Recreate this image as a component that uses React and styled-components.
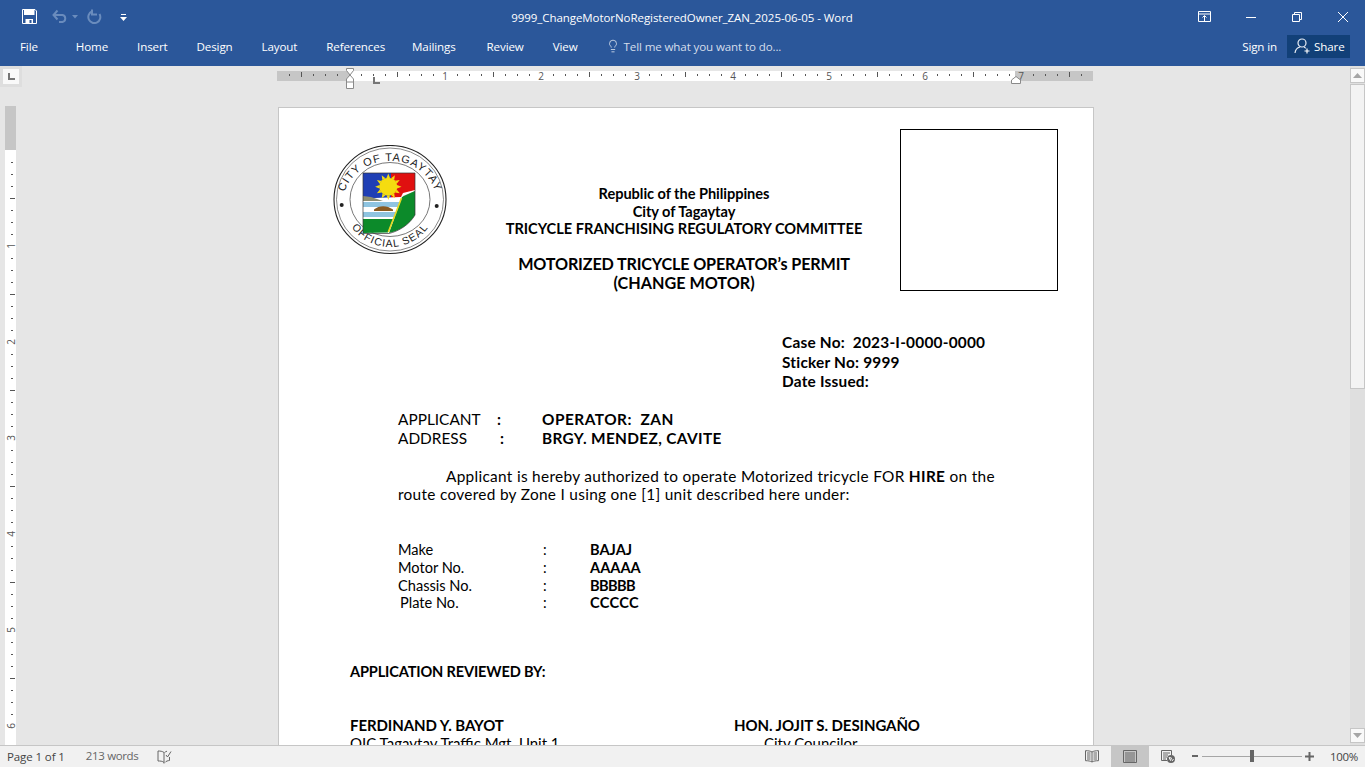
import React from 'react';
import styled, { createGlobalStyle } from 'styled-components';
import { Lightbulb } from 'lucide-react';

const GlobalStyle = createGlobalStyle`
  html, body {
    margin: 0;
    height: 100%;
    overflow: hidden;
    background: #e6e6e6;
    font-family: "Open Sans", "Noto Sans", sans-serif;
  }
  * { box-sizing: border-box; }
`;

const Window = styled.div`
  display: flex;
  flex-direction: column;
  height: 767px;
  width: 1365px;
  overflow: hidden;
`;

const TitleBar = styled.div`
  display: grid;
  grid-template-columns: 1fr auto 1fr;
  align-items: center;
  height: 33px;
  background: #2b579a;
  color: #fff;
`;

const Qat = styled.div`
  display: flex;
  align-items: center;
  height: 33px;
  padding-left: 22px;
`;

const DocTitle = styled.div`
  font-size: 11.5px;
  letter-spacing: -0.06px;
  padding-top: 2px;
  margin-left: -1px;
  white-space: nowrap;
`;

const WinControls = styled.div`
  display: flex;
  justify-content: flex-end;
  align-items: center;
  height: 33px;
  padding-right: 17px;
`;

const TabRow = styled.div`
  display: flex;
  align-items: center;
  height: 33px;
  background: #2b579a;
  color: #fff;
  font-size: 11.6px;
  letter-spacing: -0.13px;
  padding-bottom: 7px;
`;

const Tab = styled.span`
  margin-left: ${(p) => p.$left}px;
  white-space: nowrap;
`;

const TellMe = styled.span`
  display: flex;
  align-items: center;
  gap: 4px;
  margin-left: 28px;
  color: #d5deeb;
  white-space: nowrap;
`;

const Spacer = styled.div`
  flex: 1;
`;

const ShareButton = styled.div`
  display: flex;
  align-items: center;
  gap: 3px;
  height: 23px;
  width: 63px;
  margin: 0 15px 0 10px;
  padding-left: 7px;
  background: #124078;
`;

const Workspace = styled.div`
  flex: 1;
  min-height: 0;
  display: grid;
  grid-template-columns: 22px 1fr 15px;
  background: #e6e6e6;
`;

const LeftRail = styled.div`
  display: flex;
  flex-direction: column;
  overflow: hidden;
`;

const Corner = styled.div`
  display: flex;
  align-items: center;
  justify-content: center;
  width: 22px;
  height: 21px;
  background: #dedede;
`;

const CornerTab = styled.div`
  display: flex;
  align-items: center;
  justify-content: center;
  width: 16px;
  height: 15px;
  background: #f9f9f9;
`;

const VRuler = styled.svg`
  display: block;
  margin: 19px 0 0 5px;
  flex: none;
  overflow: visible;
`;

const Center = styled.div`
  position: relative;
  overflow: hidden;
`;

const HRuler = styled.svg`
  display: block;
  margin: 0 0 0 251px;
`;

const Page = styled.div`
  width: 816px;
  height: 800px;
  margin: 26px 0 0 256px;
  padding: 21px 35px 0 54px;
  background: #fff;
  border: 1px solid #c6c6c6;
  color: #000;
  font-family: Lato, "Open Sans", sans-serif;
  font-size: 15px;
`;

const Header = styled.div`
  display: flex;
  align-items: flex-start;
`;

const Seal = styled.svg`
  flex: none;
  margin-top: 16px;
`;

const TitleBlock = styled.div`
  flex: 1;
  margin-top: 56px;
  padding-left: 21px;
  text-align: center;
  font-weight: 700;
`;

const TitleLine = styled.div`
  line-height: ${(p) => p.$lh || 17.5}px;
  font-size: ${(p) => p.$size || 14.6}px;
  letter-spacing: ${(p) => p.$ls || 0}px;
  margin-top: ${(p) => p.$top || 0}px;
  white-space: nowrap;
`;

const PhotoBox = styled.div`
  flex: none;
  width: 158px;
  height: 162px;
  border: 1px solid #000;
`;

const CaseBlock = styled.div`
  margin: 41px 0 0 449px;
  font-weight: 700;
  font-size: 15.4px;
  line-height: 19.5px;
  letter-spacing: 0.22px;
`;

const Section = styled.div`
  margin: ${(p) => p.$top}px 0 0 ${(p) => p.$left ?? 65}px;
`;

const InfoRow = styled.div`
  display: grid;
  grid-template-columns: ${(p) => p.$label}px ${(p) => p.$colon}px 1fr;
  line-height: ${(p) => p.$lh}px;
  font-size: ${(p) => p.$size}px;
  white-space: nowrap;
`;

const Strong = styled.span`
  font-weight: 700;
  letter-spacing: ${(p) => p.$ls || 0}px;
`;

const PlateLabel = styled.span`
  padding-left: 2px;
`;

const Paragraph = styled.div`
  width: 620px;
  font-size: 15.4px;
  line-height: 18.3px;
  letter-spacing: 0.3px;
  white-space: nowrap;
`;

const Indent = styled.span`
  display: inline-block;
  width: 48px;
`;

const ReviewHead = styled.div`
  font-weight: 700;
  font-size: 14.6px;
  line-height: 18px;
  letter-spacing: -0.17px;
`;

const Signers = styled.div`
  display: grid;
  grid-template-columns: 384px 1fr;
  line-height: 18px;
  font-size: 15px;
`;

const SignName = styled.div`
  font-weight: 700;
  letter-spacing: -0.08px;
`;

const SignRole = styled.div`
  padding-left: ${(p) => p.$pad || 0}px;
`;

const ScrollBar = styled.div`
  display: flex;
  flex-direction: column;
  background: #dfdfdf;
`;

const ScrollButton = styled.div`
  display: flex;
  align-items: center;
  justify-content: center;
  height: 15px;
  width: 15px;
  background: #f9f9f9;
  border: 1px solid #c6c6c6;
  margin-top: ${(p) => p.$top || 0}px;
`;

const ScrollThumb = styled.div`
  width: 15px;
  height: 305px;
  margin-top: 1px;
  background: #f3f3f3;
  border: 1px solid #c6c6c6;
`;

const ScrollFoot = styled.div`
  height: 2px;
`;

const StatusBar = styled.div`
  display: flex;
  align-items: center;
  height: 22px;
  background: #f1f1f1;
  border-top: 1px solid #c6c6c6;
  color: #444;
  font-size: 11.5px;
  letter-spacing: -0.1px;
`;

const StatusText = styled.span`
  margin-left: ${(p) => p.$left}px;
  margin-top: ${(p) => p.$top || 0}px;
  color: ${(p) => p.$color || '#444'};
  letter-spacing: ${(p) => p.$ls ?? -0.1}px;
  white-space: nowrap;
`;

const ViewButton = styled.div`
  display: flex;
  align-items: center;
  justify-content: center;
  width: 38px;
  height: 21px;
  background: ${(p) => (p.$active ? '#c6c6c6' : 'transparent')};
`;

const ZoomTrack = styled.div`
  position: relative;
  width: 100px;
  height: 1px;
  margin: 0 3px 0 4px;
  background: #a6a6a6;
`;

const ZoomThumb = styled.div`
  position: absolute;
  left: 48px;
  top: -6px;
  width: 4px;
  height: 12px;
  background: #666;
`;

const StatusEnd = styled.div`
  width: 7px;
`;

const Marker = styled.svg`
  position: absolute;
  left: ${(p) => p.$x}px;
  top: ${(p) => p.$y}px;
`;

const SaveIcon = () => (
  <svg width="15" height="15" viewBox="0 0 15 15" style={{ display: 'block' }}>
    <path d="M0.5 0.5H13L14.5 2V14.5H0.5Z" fill="none" stroke="#fff" />
    <path d="M2 1H12.5V6H2ZM3.5 10H11V14.5H3.5Z" fill="#fff" />
    <rect x="7.5" y="11" width="2" height="3" fill="#2b579a" />
  </svg>
);

const UndoIcon = () => (
  <svg width="16" height="15" viewBox="0 0 16 15" style={{ marginLeft: 15 }}>
    <path d="M2 6H10.5A3.6 3.6 0 0 1 10.5 13H7M5.5 1.5L1.5 6L5.5 10.5" fill="none" stroke="#6a8cbd" strokeWidth="2" />
  </svg>
);

const DropArrow = ({ color = '#6a8cbd', left = 4 }) => (
  <svg width="6" height="4" viewBox="0 0 6 4" style={{ marginLeft: left }}>
    <path d="M0 0H6L3 3.5Z" fill={color} />
  </svg>
);

const RedoIcon = () => (
  <svg width="15" height="15" viewBox="0 0 15 15" style={{ marginLeft: 9 }}>
    <path d="M5 2.5A6 6 0 1 0 12.5 5M5 0.5V5.5H10" fill="none" stroke="#6a8cbd" strokeWidth="2" />
  </svg>
);

const CustomizeIcon = () => (
  <svg width="7" height="8" viewBox="0 0 7 8" style={{ marginLeft: 18, marginTop: 2 }}>
    <rect x="1" y="0" width="5" height="1" fill="#fff" />
    <path d="M0 3H7L3.5 7Z" fill="#fff" />
  </svg>
);

const WinIcons = () => (
  <>
    <svg width="13" height="11" viewBox="0 0 13 11">
      <path d="M0.5 0.5H12.5V10.5H0.5ZM0.5 3H12.5M6.5 10V5M4.5 6.5L6.5 4.5L8.5 6.5" fill="none" stroke="#fff" />
    </svg>
    <svg width="10" height="10" viewBox="0 0 10 10" style={{ marginLeft: 35 }}>
      <path d="M0 5.5H10" stroke="#fff" />
    </svg>
    <svg width="10" height="10" viewBox="0 0 10 10" style={{ marginLeft: 36 }}>
      <path d="M0.5 2.5H7.5V9.5H0.5ZM2.5 2.5V0.5H9.5V7.5H7.5" fill="none" stroke="#fff" />
    </svg>
    <svg width="10" height="10" viewBox="0 0 10 10" style={{ marginLeft: 36 }}>
      <path d="M0 0L10 10M10 0L0 10" stroke="#fff" />
    </svg>
  </>
);

const ShareIcon = () => (
  <svg width="17" height="16" viewBox="0 0 17 16">
    <circle cx="8" cy="5" r="4" fill="none" stroke="#e8edf5" strokeWidth="1.2" />
    <path d="M1 15C1.5 11 4 9.5 6 9M10 9.2C10.6 9.4 11.2 9.7 11.8 10.2" fill="none" stroke="#e8edf5" strokeWidth="1.2" />
    <path d="M13 10.5V15.5M10.5 13H15.5" stroke="#fff" strokeWidth="1.2" />
  </svg>
);

const ProofIcon = () => (
  <svg width="15" height="14" viewBox="0 0 15 14" style={{ marginLeft: 19 }}>
    <path d="M7 2.5C5.5 1.2 3 1 1 1V11C3 11 5.5 11 7 12.5V2.5M7 12.5V13.5M7.5 2.5C8 2 9 1.5 10 1.2M12.5 7V10.5C11 10.7 9 11 8 12.5" fill="none" stroke="#666" />
    <path d="M9 5L10.5 7L14 1.5" fill="none" stroke="#666" />
  </svg>
);

const ReadIcon = () => (
  <svg width="14" height="13" viewBox="0 0 14 13">
    <path d="M7 2C5.5 1 3 0.7 0.5 0.7V10.7C3 10.7 5.5 11 7 12C8.5 11 11 10.7 13.5 10.7V0.7C11 0.7 8.5 1 7 2ZM7 2V12" fill="none" stroke="#666" />
    <path d="M2 3H5.5M2 5H5.5M2 7H5.5M2 9H5.5M8.5 3H12M8.5 5H12M8.5 7H12M8.5 9H12" stroke="#666" />
  </svg>
);

const PrintIcon = () => (
  <svg width="14" height="13" viewBox="0 0 14 13">
    <path d="M0.5 0.5H13.5V12.5H0.5Z" fill="none" stroke="#666" />
    <path d="M2 3H12M2 5H12M2 7H12M2 9H12M2 11H12" stroke="#666" />
  </svg>
);

const WebIcon = () => (
  <svg width="14" height="13" viewBox="0 0 14 13">
    <path d="M6 10.5H0.5V0.5H10.5V5" fill="none" stroke="#666" />
    <path d="M2 3H9M2 5H7M2 7H6M2 9H5" stroke="#666" />
    <circle cx="10" cy="9" r="4" fill="#666" />
    <path d="M8 7.5L10.5 8L9.5 10.5ZM11 11L12.5 9" stroke="#f1f1f1" fill="none" />
  </svg>
);

const Triangle = ({ down }) => (
  <svg width="9" height="5" viewBox="0 0 9 5">
    <path d={down ? 'M0 0H9L4.5 5Z' : 'M0 5H9L4.5 0Z'} fill="#a6a6a6" />
  </svg>
);

const HorizontalRuler = () => {
  const ticks = [];
  const origin = 349 - 273;
  for (let i = -6; i <= 62; i++) {
    const x = origin + i * 12;
    if (x < 5 || x > 819) continue;
    if (i % 8 === 0 && i > 0 && i <= 56) {
      ticks.push(
        <text key={i} x={x} y="13.5" textAnchor="middle" fontSize="10" fontFamily="Open Sans" fill="#555">
          {i / 8}
        </text>
      );
    } else if (i % 4 === 0) {
      ticks.push(<rect key={i} x={x} y="6" width="1" height="5" fill="#555" />);
    } else {
      ticks.push(<rect key={i} x={x} y="8" width="1" height="2" fill="#555" />);
    }
  }
  return (
    <HRuler width="830" height="15" viewBox="0 0 830 15">
      <rect x="4" y="5" width="816" height="10" fill="#c6c6c6" />
      <rect x={origin} y="5" width="666" height="10" fill="#fff" />
      {ticks}
    </HRuler>
  );
};

const VerticalRuler = () => {
  const ticks = [];
  for (let i = 1; i <= 48; i++) {
    const y = 44 + i * 12;
    if (i % 8 === 0) {
      ticks.push(
        <text key={i} x="0" y="0" textAnchor="middle" fontSize="10" fontFamily="Open Sans" fill="#555"
          transform={`translate(10 ${y}) rotate(-90)`}>
          {i / 8}
        </text>
      );
    } else if (i % 4 === 0) {
      ticks.push(<rect key={i} x="5" y={y} width="5" height="1" fill="#555" />);
    } else {
      ticks.push(<rect key={i} x="6" y={y} width="2" height="1" fill="#555" />);
    }
  }
  return (
    <VRuler width="11" height="639" viewBox="0 0 11 639">
      <rect width="11" height="44" fill="#c6c6c6" />
      <rect y="44" width="11" height="595" fill="#fff" />
      {ticks}
    </VRuler>
  );
};

const sunRays = [0, 30, 60, 90, 120, 150, 180, 210, 240, 270, 300, 330];

const CitySeal = () => (
  <Seal width="114" height="110" viewBox="0 0 114 110">
    <defs>
      <path id="sealTop" d="M10 58A47 42 0 0 1 104 58" />
      <path id="sealBottom" d="M11 58A46 44 0 0 0 103 58" />
    </defs>
    <ellipse cx="57" cy="54.5" rx="56" ry="54" fill="none" stroke="#222" strokeWidth="1.1" />
    <ellipse cx="57" cy="54.5" rx="53.5" ry="51.5" fill="none" stroke="#555" strokeWidth="0.7" />
    <ellipse cx="57" cy="54.5" rx="40" ry="37" fill="none" stroke="#555" strokeWidth="0.8" />
    <text fontFamily="Liberation Sans" fontSize="11" fill="#222" letterSpacing="1">
      <textPath href="#sealTop" startOffset="50%" textAnchor="middle">CITY OF TAGAYTAY</textPath>
    </text>
    <text fontFamily="Liberation Sans" fontSize="10.5" fill="#222" letterSpacing="1">
      <textPath href="#sealBottom" startOffset="50%" textAnchor="middle">OFFICIAL SEAL</textPath>
    </text>
    <circle cx="8.7" cy="60" r="2" fill="#222" />
    <circle cx="103.7" cy="61" r="2" fill="#222" />
    <rect x="30" y="28" width="28" height="25" fill="#1f3fb5" />
    <rect x="58" y="28" width="24" height="26" fill="#e01010" />
    <path d="M30 53L42 53L68 52L70 48L82 45V54L70 58L66 76H30Z" fill="#fff" />
    <path d="M30 51L38 52L50 56H30Z" fill="#8d8d70" />
    <path d="M70 51L82 46V51L70 55Z" fill="#a09a88" />
    <path d="M30 57H66V62H30ZM30 67H64V72H30Z" fill="#8fc4e0" />
    <path d="M41 64.5C46 60 54 60 60 64.5V66H41Z" fill="#8a5a20" />
    <path d="M30 74H60L55 87.5L30 88Z" fill="#0c8a2a" />
    <path d="M69 52L82 46V70C76 80 66 86 56 88Z" fill="#0c8a2a" />
    <path d="M68.5 53L62 70L55.3 87" fill="none" stroke="#e8d820" strokeWidth="1.6" />
    <path d="M30 28H82V70C76 80 66 86 56 88.5H30Z" fill="none" stroke="#333" strokeWidth="0.7" />
    {sunRays.map((a) => (
      <path key={a} d="M53.5 33L57 33L55.3 28.5Z" fill="#f5dc10" transform={`rotate(${a} 55.3 41.7)`} />
    ))}
    <circle cx="55.3" cy="41.7" r="9" fill="#f5dc10" />
  </Seal>
);

export default function App() {
  return (
    <Window>
      <GlobalStyle />
      <TitleBar>
        <Qat>
          <SaveIcon />
          <UndoIcon />
          <DropArrow />
          <RedoIcon />
          <CustomizeIcon />
        </Qat>
        <DocTitle>9999_ChangeMotorNoRegisteredOwner_ZAN_2025-06-05 - Word</DocTitle>
        <WinControls>
          <WinIcons />
        </WinControls>
      </TitleBar>

      <TabRow>
        <Tab $left={20}>File</Tab>
        <Tab $left={38}>Home</Tab>
        <Tab $left={29}>Insert</Tab>
        <Tab $left={29}>Design</Tab>
        <Tab $left={29}>Layout</Tab>
        <Tab $left={29}>References</Tab>
        <Tab $left={27}>Mailings</Tab>
        <Tab $left={31}>Review</Tab>
        <Tab $left={29}>View</Tab>
        <TellMe>
          <Lightbulb size={14} strokeWidth={1.3} color="#e8edf5" />
          Tell me what you want to do...
        </TellMe>
        <Spacer />
        <Tab $left={0}>Sign in</Tab>
        <ShareButton>
          <ShareIcon />
          Share
        </ShareButton>
      </TabRow>

      <Workspace>
        <LeftRail>
          <Corner>
            <CornerTab>
              <svg width="7" height="7" viewBox="0 0 7 7">
                <path d="M0 0H2V5H7V7H0Z" fill="#767676" />
              </svg>
            </CornerTab>
          </Corner>
          <VerticalRuler />
        </LeftRail>

        <Center>
          <HorizontalRuler />
          <Marker $x={324} $y={2} width="9" height="22" viewBox="0 0 9 22">
            <path d="M0.5 0.5H7.5V2.5L4 7L7.5 11V20.5H0.5V11L4 7L0.5 2.5Z" fill="#fff" stroke="#8a8a8a" />
            <path d="M0.5 14H7.5" stroke="#8a8a8a" />
          </Marker>
          <Marker $x={351} $y={11} width="7" height="7" viewBox="0 0 7 7">
            <path d="M0 0H2V5H7V7H0Z" fill="#767676" />
          </Marker>
          <Marker $x={989} $y={10} width="10" height="8" viewBox="0 0 10 8">
            <path d="M0.5 7.5V4L5 0.5L9.5 4V7.5Z" fill="#fff" stroke="#8a8a8a" />
          </Marker>
          <Page>
            <Header>
              <CitySeal />
              <TitleBlock>
                <TitleLine $ls={-0.05}>Republic of the Philippines</TitleLine>
                <TitleLine $ls={-0.05}>City of Tagaytay</TitleLine>
                <TitleLine>TRICYCLE FRANCHISING REGULATORY COMMITTEE</TitleLine>
                <TitleLine $top={16.5} $lh={19} $size={16.2} $ls={-0.17}>MOTORIZED TRICYCLE OPERATOR’s PERMIT</TitleLine>
                <TitleLine $lh={19} $size={16.2}>(CHANGE MOTOR)</TitleLine>
              </TitleBlock>
              <PhotoBox />
            </Header>

            <CaseBlock>
              <div>Case No:&nbsp; 2023-I-0000-0000</div>
              <div>Sticker No: 9999</div>
              <div>Date Issued:</div>
            </CaseBlock>

            <Section $top={18.5}>
              <InfoRow $label={99} $colon={45} $lh={19} $size={15.4}>
                <span>APPLICANT</span>
                <Strong>:</Strong>
                <Strong $ls={0.5}>OPERATOR:&nbsp; ZAN</Strong>
              </InfoRow>
              <InfoRow $label={102} $colon={42} $lh={19} $size={15.4}>
                <span>ADDRESS</span>
                <Strong>:</Strong>
                <Strong $ls={0.35}>BRGY. MENDEZ, CAVITE</Strong>
              </InfoRow>
            </Section>

            <Section $top={19}>
              <Paragraph>
                <Indent />
                Applicant is hereby authorized to operate Motorized tricycle FOR <Strong $ls={0.31}>HIRE</Strong> on the
                <br />
                route covered by Zone I using one [1] unit described here under:
              </Paragraph>
            </Section>

            <Section $top={37.5}>
              <InfoRow $label={145} $colon={47} $lh={17.8} $size={14.6}>
                <span>Make</span>
                <span>:</span>
                <Strong>BAJAJ</Strong>
              </InfoRow>
              <InfoRow $label={145} $colon={47} $lh={17.8} $size={14.6}>
                <span>Motor No.</span>
                <span>:</span>
                <Strong>AAAAA</Strong>
              </InfoRow>
              <InfoRow $label={145} $colon={47} $lh={17.8} $size={14.6}>
                <span>Chassis No.</span>
                <span>:</span>
                <Strong $ls={-0.6}>BBBBB</Strong>
              </InfoRow>
              <InfoRow $label={145} $colon={47} $lh={17.8} $size={14.6}>
                <PlateLabel>Plate No.</PlateLabel>
                <span>:</span>
                <Strong $ls={0.3}>CCCCC</Strong>
              </InfoRow>
            </Section>

            <Section $top={50.5} $left={17}>
              <ReviewHead>APPLICATION REVIEWED BY:</ReviewHead>
            </Section>

            <Section $top={35} $left={17}>
              <Signers>
                <div>
                  <SignName>FERDINAND Y. BAYOT</SignName>
                  <SignRole>OIC Tagaytay Traffic Mgt. Unit 1</SignRole>
                </div>
                <div>
                  <SignName>HON. JOJIT S. DESINGAÑO</SignName>
                  <SignRole $pad={30}>City Councilor</SignRole>
                </div>
              </Signers>
            </Section>
          </Page>
        </Center>

        <ScrollBar>
          <ScrollButton $top={2}>
            <Triangle />
          </ScrollButton>
          <ScrollThumb />
          <Spacer />
          <ScrollButton>
            <Triangle down />
          </ScrollButton>
          <ScrollFoot />
        </ScrollBar>
      </Workspace>

      <StatusBar>
        <StatusText $left={7}>Page 1 of 1</StatusText>
        <StatusText $left={21} $top={-2} $color="#666" $ls={-0.35}>213 words</StatusText>
        <ProofIcon />
        <Spacer />
        <ViewButton><ReadIcon /></ViewButton>
        <ViewButton $active><PrintIcon /></ViewButton>
        <ViewButton><WebIcon /></ViewButton>
        <svg width="6" height="3" viewBox="0 0 6 3" style={{ marginLeft: 5 }}>
          <rect width="6" height="2" fill="#666" />
        </svg>
        <ZoomTrack>
          <ZoomThumb />
        </ZoomTrack>
        <svg width="9" height="9" viewBox="0 0 9 9">
          <path d="M0 3.5H9V5.5H0ZM3.5 0H5.5V9H3.5Z" fill="#666" />
        </svg>
        <StatusText $left={16} $ls={-0.3}>100%</StatusText>
        <StatusEnd />
      </StatusBar>
    </Window>
  );
}
